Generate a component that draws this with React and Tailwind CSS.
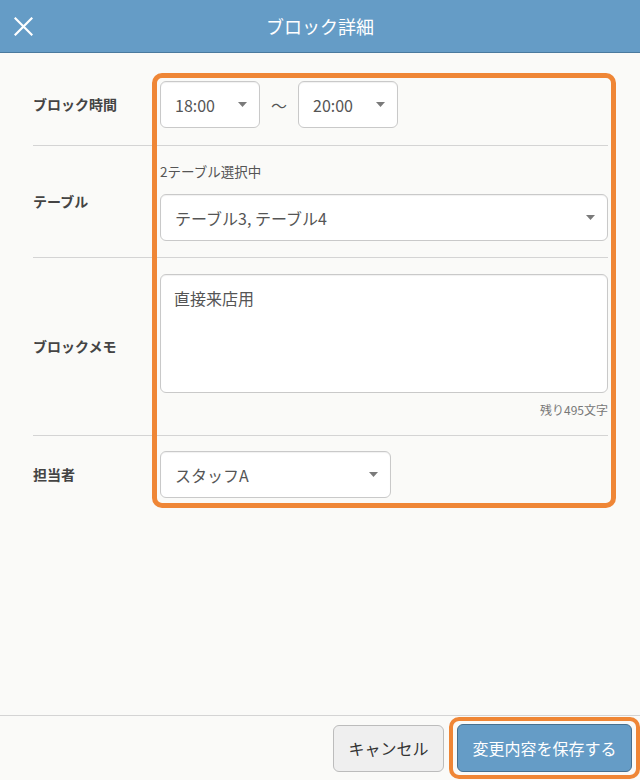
import React from "react";

const font = { fontFamily: '"Noto Sans CJK JP", "Noto Sans", sans-serif' };

function Caret() {
  return (
    <svg width="9" height="5" viewBox="0 0 9 5" className="shrink-0">
      <path d="M0 0 L9 0 L4.5 5 Z" fill="#7a7a7a" />
    </svg>
  );
}

function Select({ value, className }) {
  return (
    <div
      className={
        "h-[47px] flex items-center justify-between pl-[14px] pr-[12px] bg-white border border-[#c9c9c9] rounded-[6px] text-[16px] text-[#555] shadow-[inset_0_1px_1px_rgba(0,0,0,0.06)] " +
        className
      }
    >
      <span>{value}</span>
      <Caret />
    </div>
  );
}

function Label({ children }) {
  return <div className="text-[14px] font-bold text-[#444]">{children}</div>;
}

export default function App() {
  return (
    <div style={font} className="w-[640px] h-[780px] flex flex-col bg-[#fafaf8] overflow-hidden">
      <header className="relative h-[53px] shrink-0 bg-[#659cc6] border-b border-[#4a7a9e] flex items-center justify-center">
        <button className="absolute left-[13px] top-[16px] w-[20px] h-[20px] flex items-center justify-center">
          <svg width="19" height="19" viewBox="0 0 19 19">
            <path d="M1.5 1.5 L17.5 17.5 M17.5 1.5 L1.5 17.5" stroke="white" strokeWidth="2.2" strokeLinecap="square" />
          </svg>
        </button>
        <h1 className="text-white text-[18px] font-normal">ブロック詳細</h1>
      </header>

      <main className="relative flex-1">
        <div className="pt-[11px] pl-[33px] pr-[32px]">
          <div className="grid grid-cols-[127px_1fr] items-center pt-[17px] pb-[17px] border-b border-[#d4d4d4]">
            <Label>ブロック時間</Label>
            <div className="flex items-center">
              <Select value="18:00" className="w-[100px]" />
              <span className="w-[38px] text-center text-[16px] text-[#555]">〜</span>
              <Select value="20:00" className="w-[100px]" />
            </div>
          </div>

          <div className="grid grid-cols-[127px_1fr] items-center pt-[16px] pb-[16px] border-b border-[#d4d4d4]">
            <Label>テーブル</Label>
            <div className="flex flex-col">
              <div className="text-[13.5px] leading-[18px] text-[#555] mb-[14px]">2テーブル選択中</div>
              <Select value="テーブル3, テーブル4" className="w-full" />
            </div>
          </div>

          <div className="grid grid-cols-[127px_1fr] items-center pt-[16px] pb-[17px] border-b border-[#d4d4d4]">
            <Label>ブロックメモ</Label>
            <div className="flex flex-col">
              <div className="h-[119px] bg-white border border-[#c9c9c9] rounded-[6px] px-[13px] pt-[11px] text-[16px] leading-[24px] text-[#555] shadow-[inset_0_1px_1px_rgba(0,0,0,0.06)]">
                直接来店用
              </div>
              <div className="mt-[9px] text-right text-[12px] leading-[16px] text-[#777]">残り495文字</div>
            </div>
          </div>

          <div className="grid grid-cols-[127px_1fr] items-center pt-[15px] pb-[16px]">
            <Label>担当者</Label>
            <Select value="スタッフA" className="w-[231px]" />
          </div>
        </div>

        <div className="pointer-events-none absolute left-[152px] top-[20px] w-[464px] h-[435px] border-[5px] border-[#ef8636] rounded-[10px]" />
      </main>

      <footer className="h-[65px] shrink-0 border-t border-[#d4d4d4] flex items-center justify-end gap-[13px] pr-[8px]">
        <button className="h-[47px] w-[111px] bg-[#efefef] border border-[#bcbcbc] rounded-[6px] text-[16px] text-[#333]">
          キャンセル
        </button>
        <div className="relative">
          <button className="h-[48px] w-[175px] bg-[#659cc6] border border-[#47708f] rounded-[6px] text-[16px] text-white">
            変更内容を保存する
          </button>
          <span className="pointer-events-none absolute left-[-8px] right-[-8px] top-[-7px] bottom-[-7px] border-[4px] border-[#ef8636] rounded-[10px]" />
        </div>
      </footer>
    </div>
  );
}
